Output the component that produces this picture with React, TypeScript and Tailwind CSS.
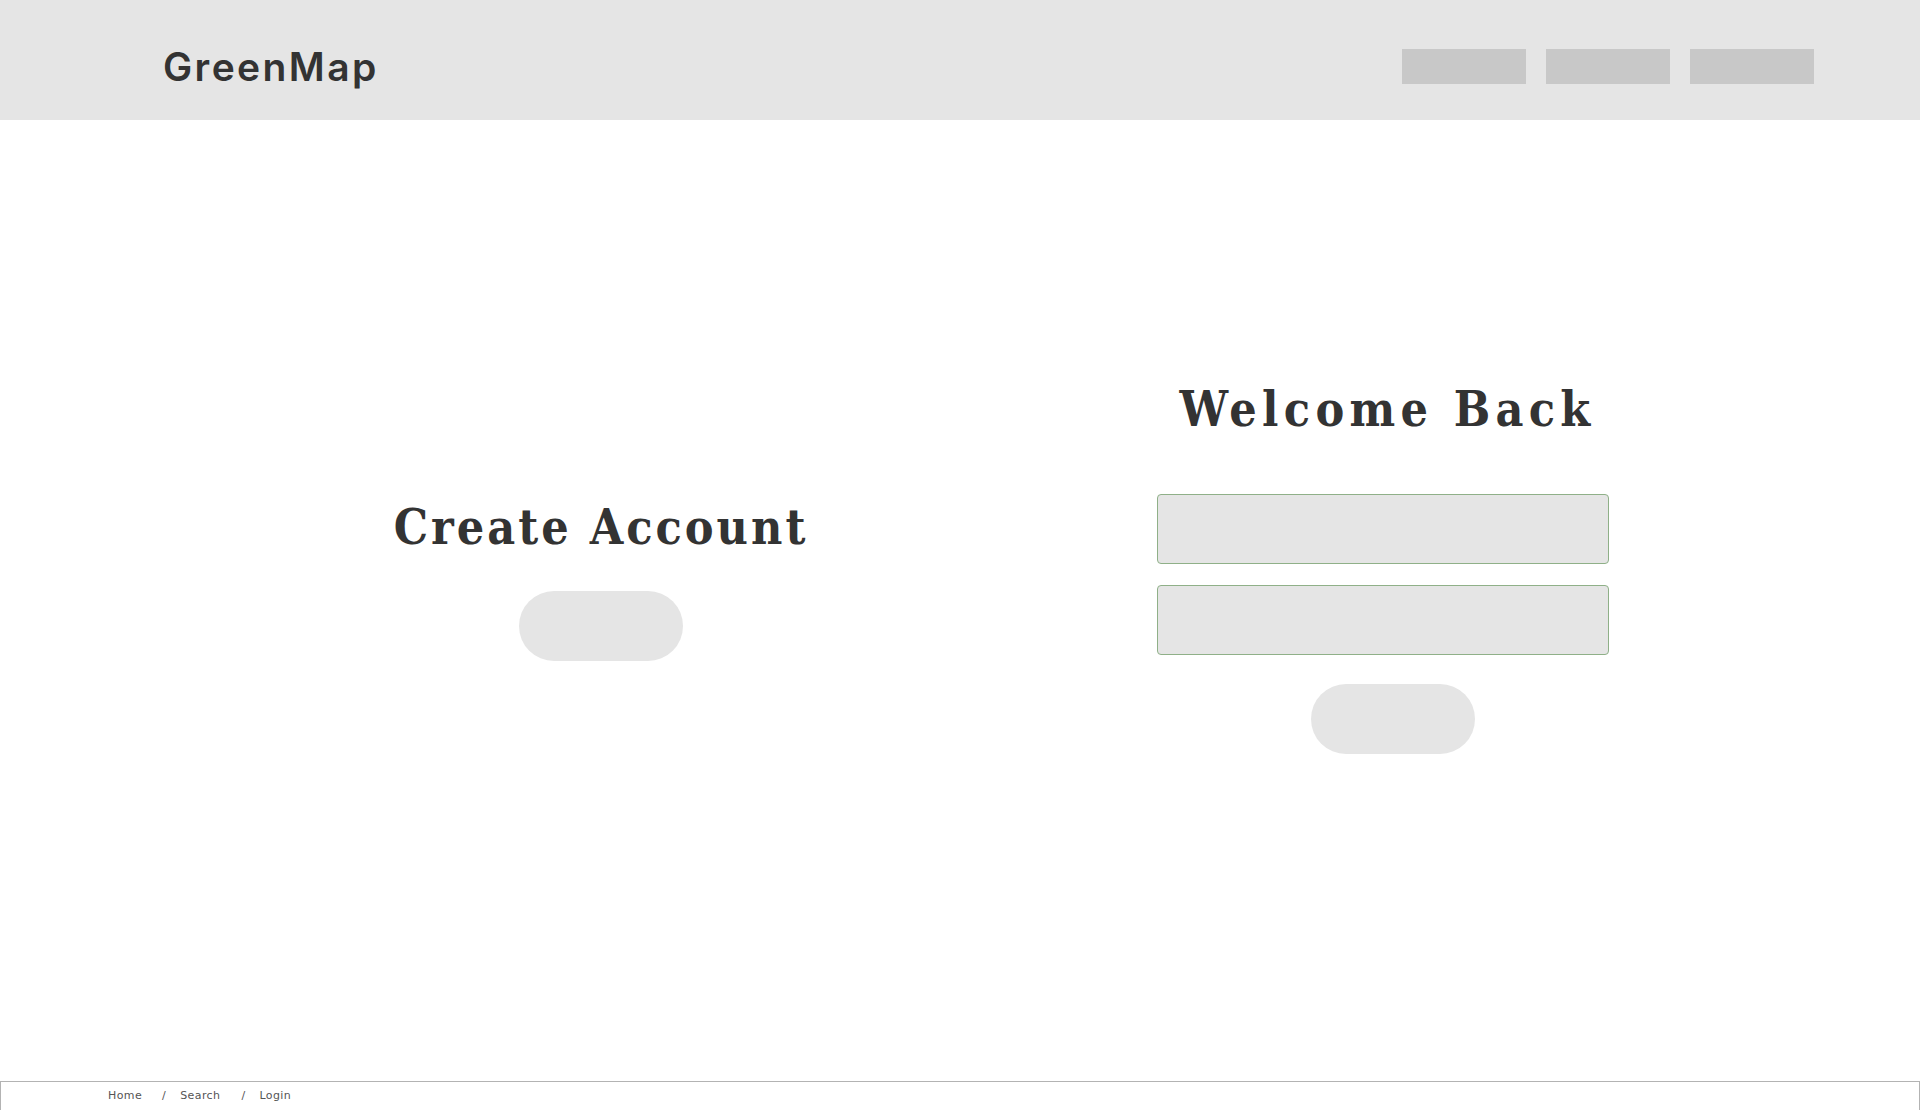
import React from 'react';

const serif = { fontFamily: '"DejaVu Serif Condensed", "DejaVu Serif", "Liberation Serif", serif' };
const sans = { fontFamily: 'Inter, "Noto Sans", sans-serif' };
const small = { fontFamily: '"DejaVu Sans", Verdana, sans-serif' };

function Header() {
  return (
    <header className="h-[120px] bg-[#e5e5e5] flex items-center justify-between pt-[12px] pl-[163px] pr-[106px]">
      <div className="text-[39px] font-semibold text-[#333333] leading-none tracking-[2.4px]" style={sans}>
        GreenMap
      </div>
      <nav className="flex gap-[20px]">
        <div className="w-[124px] h-[35px] bg-[#c8c8c8]" />
        <div className="w-[124px] h-[35px] bg-[#c8c8c8]" />
        <div className="w-[124px] h-[35px] bg-[#c8c8c8]" />
      </nav>
    </header>
  );
}

function PillButton() {
  return <button className="w-[164px] h-[70px] rounded-full bg-[#e5e5e5]" />;
}

function Field() {
  return (
    <input className="w-[452px] h-[70px] rounded-[4px] border border-[#8fb088] bg-[#e5e5e5] outline-none" />
  );
}

export default function App() {
  return (
    <div className="w-full min-h-screen bg-white flex flex-col">
      <Header />
      <main className="h-[961px] flex pl-[209px]">
        {/* Left - sign up */}
        <section className="w-[784px] flex flex-col items-center pt-[383px]">
          <h2 className="text-[48px] font-bold leading-none tracking-[3px] text-[#333333]" style={serif}>
            Create Account
          </h2>
          <div className="mt-[40px]">
            <PillButton />
          </div>
        </section>

        {/* Right - login */}
        <section className="w-[784px] flex flex-col items-center pt-[265px]">
          <h2 className="ml-[5px] text-[48px] font-bold leading-none tracking-[5.3px] text-[#333333]" style={serif}>
            Welcome Back
          </h2>
          <div className="mt-[61px] mr-[4px] flex flex-col gap-[21px]">
            <Field />
            <Field />
          </div>
          <div className="mt-[29px] ml-[16px]">
            <PillButton />
          </div>
        </section>
      </main>
      <footer className="h-[40px] border border-[#b3b3b3] pl-[107px] pt-[6px]">
        <div className="flex items-center text-[11px] text-[#555555] tracking-[0.4px]" style={small}>
          <span>Home</span>
          <span className="ml-[20px] mr-[14px]">/</span>
          <span>Search</span>
          <span className="ml-[21px] mr-[14px]">/</span>
          <span>Login</span>
        </div>
      </footer>
    </div>
  );
}
